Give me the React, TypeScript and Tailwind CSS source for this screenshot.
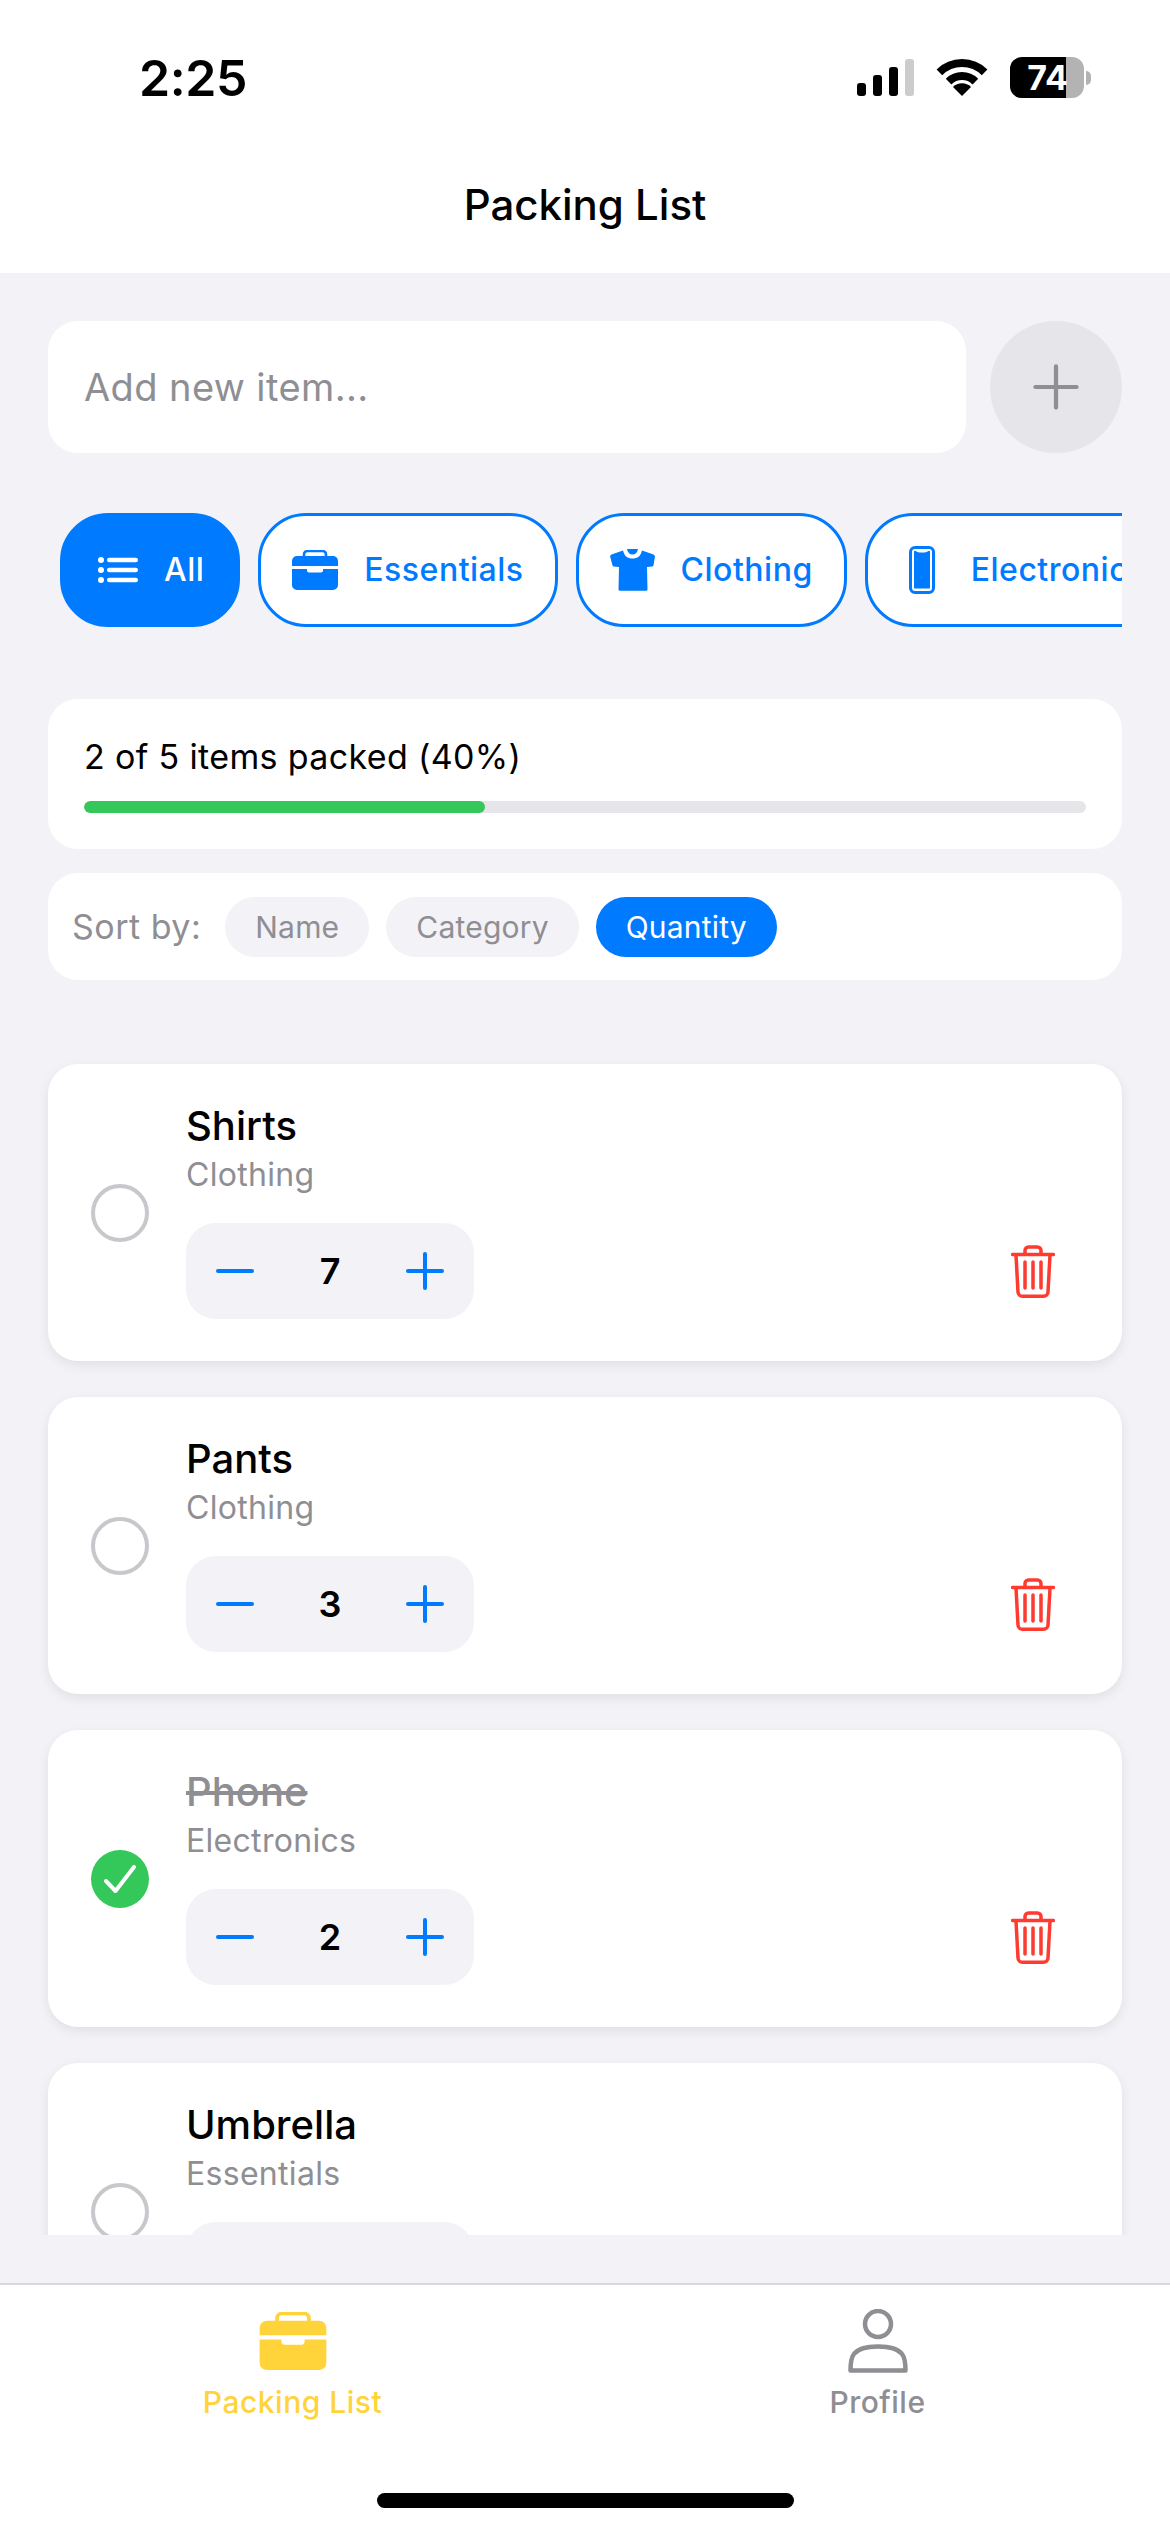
import React from "react";

const BLUE = "#007aff";

function Briefcase({ className, color }: { className: string; color: string }) {
  return (
    <svg viewBox="0 0 46 40" className={className}>
      <path d="M12 7V4.500C12 2.500 13.500 1 15.500 1h15C32.500 1 34 2.500 34 4.500V7" fill="none" stroke={color} strokeWidth="2.600" />
      <path d="M5 6h36a5 5 0 0 1 5 5v5H0v-5a5 5 0 0 1 5-5z" fill={color} />
      <path d="M0 19h15v1.500c0 1 .8 2 2 2h12c1.200 0 2-1 2-2V19h15v16a5 5 0 0 1-5 5H5a5 5 0 0 1-5-5z" fill={color} />
    </svg>
  );
}

function ListIcon() {
  return (
    <svg viewBox="0 0 40 26" className="h-[26px] w-[40px]" fill="#fff">
      <circle cx="3" cy="3" r="3" />
      <circle cx="3" cy="13" r="3" />
      <circle cx="3" cy="23" r="3" />
      <rect x="9" y="0.800" width="31" height="4.500" rx="2.200" />
      <rect x="9" y="10.800" width="31" height="4.500" rx="2.200" />
      <rect x="9" y="20.800" width="31" height="4.500" rx="2.200" />
    </svg>
  );
}

function Shirt() {
  return (
    <svg viewBox="0 0 45 42" className="h-[42px] w-[45px]" fill={BLUE}>
      <path d="M13 1.500C14.500 7.500 17.500 9.500 22.500 9.500S30.500 7.500 32 1.500L43.500 5.500 45 7l-1.500 9.500-1 1-5.500.5.500 23-1 .7H9.500l-1-.7.500-23-5.500-.5-1-1L0 7l1.500-1.500z" />
      <path d="M17 0h11c-.5 3.500-2.500 5.500-5.500 5.500S17.500 3.500 17 0z" />
    </svg>
  );
}

function Phone() {
  return (
    <svg viewBox="0 0 26 48" className="ml-[10px] mr-[10px] h-[48px] w-[26px]" fill="none">
      <rect x="1.500" y="1.500" width="23" height="45" rx="4.500" stroke={BLUE} strokeWidth="3" />
      <path d="M5 5.500c0-.5.5-1 1-.7l2 1c1 .5 1.500.7 2.500.7h5c1 0 1.500-.2 2.500-.7l2-1c.5-.3 1 .2 1 .7V41.500c0 .6-.4 1-1 1H6c-.6 0-1-.4-1-1z" fill={BLUE} />
    </svg>
  );
}

function Trash() {
  return (
    <svg viewBox="0 0 44 53" className="h-[53px] w-[44px]" fill="none" stroke="#ff3b30" strokeWidth="3.500" strokeLinecap="round" strokeLinejoin="round">
      <path d="M1.500 9.500h41" />
      <path d="M14 9V5.500C14 3.500 15.500 2 17.500 2h9C28.500 2 30 3.500 30 5.500V9" />
      <path d="M5 10l2 37c.1 2.500 2 4.200 4.500 4.200h21c2.500 0 4.400-1.700 4.500-4.200l2-37" />
      <path d="M14 17v26M22 17v26M30 17v26" />
    </svg>
  );
}

function Cross({ minus, size, color, width }: { minus?: boolean; size: string; color: string; width: number }) {
  return (
    <svg viewBox="0 0 38 38" className={size} fill="none" stroke={color} strokeWidth={width} strokeLinecap="round">
      <path d="M2 19h34" />
      {!minus && <path d="M19 2v34" />}
    </svg>
  );
}

function Wifi() {
  return (
    <svg viewBox="0 0 52 37" className="h-[37px] w-[52px]" fill="none" stroke="#000" strokeWidth="8">
      <path d="M3.400 13.400a32 32 0 0 1 45.200 0" />
      <path d="M12.600 22.600a19 19 0 0 1 26.800 0" />
      <path d="M26 37l-9-9a12.700 12.700 0 0 1 18 0z" fill="#000" stroke="none" />
    </svg>
  );
}

function Chip({ icon, label, active }: { icon: React.ReactNode; label: string; active?: boolean }) {
  return (
    <div
      className={`flex h-[114px] shrink-0 items-center gap-[26px] rounded-[48px] border-[3px] border-[#007aff] text-[32px] font-medium tracking-[0.5px] ${
        active ? "ml-[12px] bg-[#007aff] pl-[35px] pr-[33px] text-white" : "bg-white px-[31px] text-[#007aff]"
      }`}
    >
      {icon}
      <span>{label}</span>
    </div>
  );
}

function SortChip({ label, active }: { label: string; active?: boolean }) {
  return (
    <div
      className={`flex h-[60px] items-center rounded-[30px] px-[30px] pt-[2px] text-[30px] tracking-[0.2px] ${
        active ? "bg-[#007aff] text-white" : "bg-[#f2f2f7] text-[#8e8e93]"
      }`}
    >
      {label}
    </div>
  );
}

function Card({ name, category, qty, done }: { name: string; category: string; qty: number; done?: boolean }) {
  return (
    <div className="flex h-[297px] shrink-0 items-center rounded-[30px] bg-white pl-[43px] pr-[67px] shadow-[0_4px_12px_rgba(0,0,0,0.08)]">
      {done ? (
        <div className="flex h-[58px] w-[58px] shrink-0 items-center justify-center rounded-full bg-[#34c759]">
          <svg viewBox="0 0 32 28" className="h-[28px] w-[32px]" fill="none" stroke="#fff" strokeWidth="4" strokeLinecap="round" strokeLinejoin="round">
            <path d="M2 16l9.500 10L30 2" />
          </svg>
        </div>
      ) : (
        <div className="h-[58px] w-[58px] shrink-0 rounded-full border-[4px] border-[#c7c7cc]" />
      )}
      <div className="ml-[37px] flex min-w-0 flex-1 flex-col pb-[3px]">
        <div className={`text-[40px] font-[550] leading-[46px] ${done ? "text-[#8e8e93] line-through" : "text-black"}`}>{name}</div>
        <div className="mt-[7px] text-[32px] leading-[38px] tracking-[0.3px] text-[#8e8e93]">{category}</div>
        <div className="mt-[29px] flex items-center justify-between">
          <div className="flex h-[96px] w-[288px] items-center justify-between rounded-[30px] bg-[#f2f2f7] px-[30px]">
            <Cross minus size="h-[38px] w-[38px]" color={BLUE} width={4} />
            <span className="text-[36px] font-semibold text-black">{qty}</span>
            <Cross size="h-[38px] w-[38px]" color={BLUE} width={4} />
          </div>
          <Trash />
        </div>
      </div>
    </div>
  );
}

export default function App() {
  return (
    <div className="flex h-[2532px] w-[1170px] flex-col overflow-hidden bg-[#f2f2f7] font-['Inter',sans-serif] text-black">
      <header className="flex h-[273px] shrink-0 flex-col bg-white">
        <div className="flex h-[180px] items-start justify-between pl-[139px] pr-[79px] pt-[52px]">
          <span className="text-[50px] font-semibold leading-[52px] tracking-[-0.4px]">2:25</span>
          <div className="flex items-center pt-[5px]">
            <div className="flex h-[37px] items-end gap-[6.500px]">
              <div className="h-[13px] w-[9.500px] rounded-[3px] bg-black" />
              <div className="h-[21px] w-[9.500px] rounded-[3px] bg-black" />
              <div className="h-[29px] w-[9.500px] rounded-[3px] bg-black" />
              <div className="h-[37px] w-[9.500px] rounded-[3px] bg-[#cccccc]" />
            </div>
            <div className="ml-[22px]"><Wifi /></div>
            <div className="ml-[22px] flex items-center">
              <div className="flex h-[41px] w-[74px] overflow-hidden rounded-[12px] bg-[#b3b3b3]">
                <div className="flex h-full w-[56px] items-center justify-end bg-black">
                  <span className="-mr-[2px] text-[34px] font-bold leading-none text-white">74</span>
                </div>
              </div>
              <div className="ml-[2px] h-[14px] w-[5px] rounded-r-full bg-[#b3b3b3]" />
            </div>
          </div>
        </div>
        <h1 className="text-center text-[42px] font-[550] leading-[50px]">Packing List</h1>
      </header>

      <main className="flex min-h-0 flex-1 flex-col px-[48px] pb-[48px] pt-[48px]">
        <div className="flex shrink-0 gap-[24px]">
          <div className="flex h-[132px] flex-1 items-center rounded-[30px] bg-white pl-[36px] text-[38px] tracking-[0.4px] text-[#8e8e93]">Add new item...</div>
          <div className="flex h-[132px] w-[132px] items-center justify-center rounded-full bg-[#e5e5ea]">
            <Cross size="h-[46px] w-[46px]" color="#8e8e93" width={3.500} />
          </div>
        </div>

        <div className="mt-[60px] flex shrink-0 gap-[18px] overflow-hidden">
          <Chip active icon={<ListIcon />} label="All" />
          <Chip icon={<Briefcase className="h-[40px] w-[46px]" color={BLUE} />} label="Essentials" />
          <Chip icon={<Shirt />} label="Clothing" />
          <Chip icon={<Phone />} label="Electronics" />
        </div>

        <div className="mt-[72px] h-[150px] shrink-0 rounded-[30px] bg-white px-[36px] pt-[36px]">
          <div className="text-[34px] leading-[44px] tracking-[0.35px]">2 of 5 items packed (40%)</div>
          <div className="mt-[22px] h-[12px] overflow-hidden rounded-full bg-[#e5e5ea]">
            <div className="h-full w-[40%] rounded-full bg-[#34c759]" />
          </div>
        </div>

        <div className="mt-[24px] flex h-[107px] shrink-0 items-center gap-[17px] rounded-[30px] bg-white pl-[24px]">
          <span className="mr-[7px] text-[34px] tracking-[0.5px] text-[#8e8e93]">Sort by:</span>
          <SortChip label="Name" />
          <SortChip label="Category" />
          <SortChip label="Quantity" active />
        </div>

        <div className="-mx-[48px] mt-[50px] flex min-h-0 flex-1 flex-col gap-[36px] overflow-hidden px-[48px] pt-[34px]">
          <Card name="Shirts" category="Clothing" qty={7} />
          <Card name="Pants" category="Clothing" qty={3} />
          <Card name="Phone" category="Electronics" qty={2} done />
          <Card name="Umbrella" category="Essentials" qty={1} />
        </div>
      </main>

      <nav className="flex h-[249px] shrink-0 flex-col border-t-2 border-[#d8d8dc] bg-white">
        <div className="flex flex-1 items-start">
          <div className="flex w-[585px] flex-col items-center pt-[27px]">
            <Briefcase className="h-[58px] w-[68px]" color="#ffd43b" />
            <span className="mt-[14px] text-[30px] font-medium leading-[36px] tracking-[0.5px] text-[#ffd43b]">Packing List</span>
          </div>
          <div className="flex w-[585px] flex-col items-center pt-[24px]">
            <svg viewBox="0 0 60 64" className="h-[64px] w-[60px]" fill="none" stroke="#8e8e93" strokeWidth="4.500">
              <circle cx="30" cy="15" r="13" />
              <path d="M2.500 61.500c0-12 0-24 27.500-24s27.500 12 27.500 24z" strokeLinejoin="round" />
            </svg>
            <span className="mt-[11px] text-[30px] font-medium leading-[36px] tracking-[0.5px] text-[#8e8e93]">Profile</span>
          </div>
        </div>
        <div className="flex justify-center pb-[24px]">
          <div className="h-[15px] w-[417px] rounded-full bg-black" />
        </div>
      </nav>
    </div>
  );
}
